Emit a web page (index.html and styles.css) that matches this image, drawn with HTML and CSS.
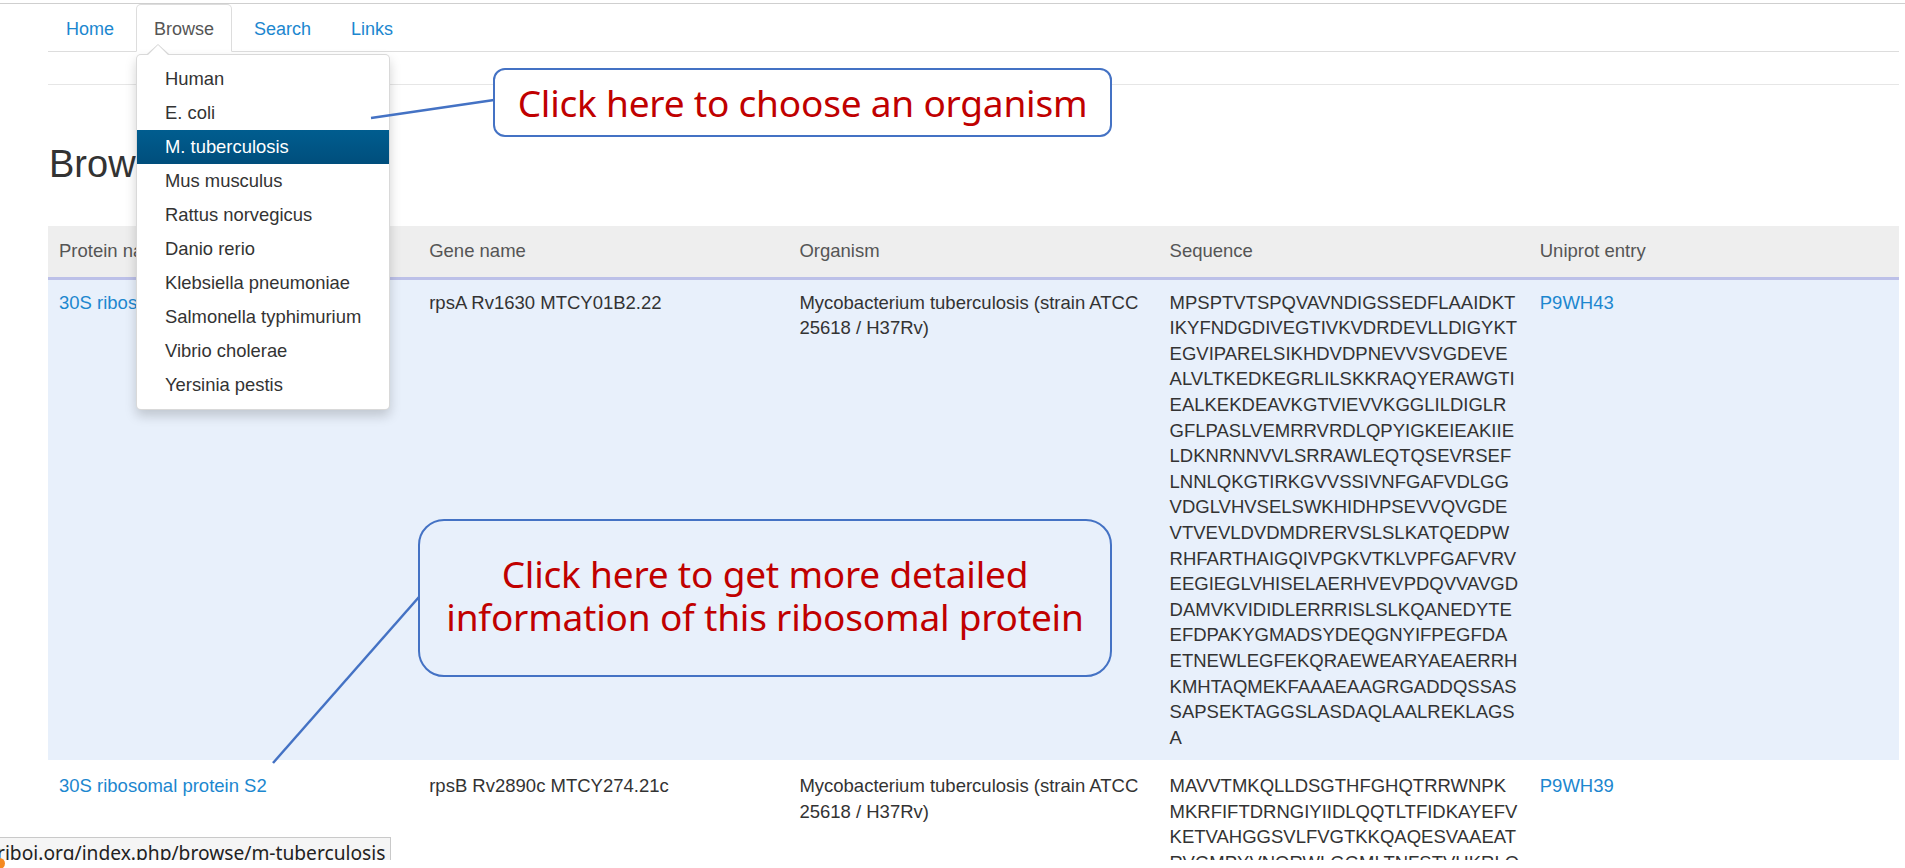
FILE: index.html
```html
<!DOCTYPE html>
<html>
<head>
<meta charset="utf-8">
<title>Browse</title>
<link rel="stylesheet" href="styles.css">
</head>
<body>
<div class="topline"></div>
<div class="container">
  <ul class="nav-tabs">
    <li class="tab"><a href="#">Home</a></li>
    <li class="tab active"><a href="#">Browse</a></li>
    <li class="tab"><a href="#">Search</a></li>
    <li class="tab"><a href="#">Links</a></li>
  </ul>
  <div class="subnav"></div>
  <h2 class="page-title">Browse</h2>
  <table class="proteins">
    <thead>
      <tr>
        <th>Protein name</th>
        <th>Gene name</th>
        <th>Organism</th>
        <th>Sequence</th>
        <th>Uniprot entry</th>
      </tr>
    </thead>
    <tbody>
      <tr class="hover">
        <td><a href="#">30S ribosomal protein S1</a></td>
        <td>rpsA Rv1630 MTCY01B2.22</td>
        <td>Mycobacterium tuberculosis (strain ATCC 25618 / H37Rv)</td>
        <td class="seq">MPSPTVTSPQVAVNDIGSSEDFLAAIDKT<br>IKYFNDGDIVEGTIVKVDRDEVLLDIGYKT<br>EGVIPARELSIKHDVDPNEVVSVGDEVE<br>ALVLTKEDKEGRLILSKKRAQYERAWGTI<br>EALKEKDEAVKGTVIEVVKGGLILDIGLR<br>GFLPASLVEMRRVRDLQPYIGKEIEAKIIE<br>LDKNRNNVVLSRRAWLEQTQSEVRSEF<br>LNNLQKGTIRKGVVSSIVNFGAFVDLGG<br>VDGLVHVSELSWKHIDHPSEVVQVGDE<br>VTVEVLDVDMDRERVSLSLKATQEDPW<br>RHFARTHAIGQIVPGKVTKLVPFGAFVRV<br>EEGIEGLVHISELAERHVEVPDQVVAVGD<br>DAMVKVIDIDLERRRISLSLKQANEDYTE<br>EFDPAKYGMADSYDEQGNYIFPEGFDA<br>ETNEWLEGFEKQRAEWEARYAEAERRH<br>KMHTAQMEKFAAAEAAGRGADDQSSAS<br>SAPSEKTAGGSLASDAQLAALREKLAGS<br>A</td>
        <td><a href="#">P9WH43</a></td>
      </tr>
      <tr>
        <td><a href="#">30S ribosomal protein S2</a></td>
        <td>rpsB Rv2890c MTCY274.21c</td>
        <td>Mycobacterium tuberculosis (strain ATCC 25618 / H37Rv)</td>
        <td class="seq">MAVVTMKQLLDSGTHFGHQTRRWNPK<br>MKRFIFTDRNGIYIIDLQQTLTFIDKAYEFV<br>KETVAHGGSVLFVGTKKQAQESVAAEAT<br>RVGMPYVNQRWLGGMLTNFSTVHKRLQ<br>RLKELEAMEQTGGFEGRTKKEILMLTRE<br>MNKLERTLGGIRDMAKVPSAIWVVDTNK</td>
        <td><a href="#">P9WH39</a></td>
      </tr>
    </tbody>
  </table>
</div>

<ul class="dropdown">
  <li><a href="#">Human</a></li>
  <li><a href="#">E. coli</a></li>
  <li class="selected"><a href="#">M. tuberculosis</a></li>
  <li><a href="#">Mus musculus</a></li>
  <li><a href="#">Rattus norvegicus</a></li>
  <li><a href="#">Danio rerio</a></li>
  <li><a href="#">Klebsiella pneumoniae</a></li>
  <li><a href="#">Salmonella typhimurium</a></li>
  <li><a href="#">Vibrio cholerae</a></li>
  <li><a href="#">Yersinia pestis</a></li>
</ul>
<div class="caret"></div>

<svg class="connectors" width="1905" height="868" viewBox="0 0 1905 868">
  <line x1="371" y1="118" x2="494" y2="100" />
  <line x1="273" y1="763" x2="419" y2="597" />
</svg>

<div class="callout callout-organism">Click here to choose an organism</div>
<div class="callout callout-detail">Click here to get more detailed<br>information of this ribosomal protein</div>

<div class="statusbar">riboi.org/index.php/browse/m-tuberculosis</div>
<div class="bottom-strip"></div>
<div class="orange-dot"></div>
</body>
</html>
```

FILE: styles.css
```css
html, body {
  margin: 0;
  padding: 0;
  background: #ffffff;
}
body {
  font-family: "Liberation Sans", Arial, sans-serif;
  font-size: 18px;
  line-height: 25.6px;
  color: #333333;
  position: relative;
  overflow: hidden;
  height: 868px;
}
a {
  color: #1c87cf;
  text-decoration: none;
}
.topline {
  height: 3px;
  border-bottom: 1px solid #cfcfcf;
}
.container {
  margin-left: 48px;
  width: 1851px;
}
.nav-tabs {
  list-style: none;
  margin: 0;
  padding: 0;
  display: flex;
  border-bottom: 1px solid #dddddd;
}
.tab {
  margin-right: 4px;
  margin-bottom: -1px;
}
.tab a {
  display: block;
  padding: 11px 17px 9px 17px;
  line-height: 26px;
  border: 1px solid transparent;
  border-radius: 5px 5px 0 0;
}
.tab.active a {
  color: #555555;
  background: #ffffff;
  border-color: #dddddd;
  border-bottom-color: transparent;
}
.subnav {
  height: 32px;
  border-bottom: 1px solid #e6e6e6;
}
.page-title {
  font-size: 38px;
  font-weight: 500;
  line-height: 42px;
  margin: 58px 0 41px 1px;
  color: #333333;
}
.proteins {
  width: 1851px;
  border-collapse: collapse;
  table-layout: fixed;
  font-size: 18.5px;
}
.proteins th {
  background: #eeeeee;
  color: #555555;
  font-weight: normal;
  text-align: left;
  padding: 12px 6px 13px 11px;
  border-bottom: 3px solid #bcc0e8;
  vertical-align: top;
}
.proteins td {
  padding: 10px 6px 10px 11px;
  vertical-align: top;
}
.proteins tr.hover td {
  background: #e8f0fb;
}
.proteins tbody tr + tr td {
  padding-top: 13px;
}
.seq {
  word-break: break-all;
}
.dropdown {
  position: absolute;
  left: 136px;
  top: 54px;
  width: 252px;
  margin: 0;
  padding: 7px 0;
  list-style: none;
  background: #ffffff;
  border: 1px solid rgba(0, 0, 0, 0.15);
  border-radius: 5px;
  box-shadow: 0 6px 12px rgba(0, 0, 0, 0.175);
  font-size: 18.4px;
}
.dropdown li a {
  display: block;
  padding: 4px 20px 4px 28px;
  line-height: 26px;
  color: #333333;
  white-space: nowrap;
}
.dropdown li.selected a {
  color: #ffffff;
  background: linear-gradient(#005d8f, #004e7c);
}
.caret {
  position: absolute;
  left: 147px;
  top: 44px;
  width: 0;
  height: 0;
  border-left: 11px solid transparent;
  border-right: 11px solid transparent;
  border-bottom: 10px solid #d6d6d6;
}
.caret::after {
  content: "";
  position: absolute;
  left: -10px;
  top: 1px;
  border-left: 10px solid transparent;
  border-right: 10px solid transparent;
  border-bottom: 10px solid #ffffff;
}
.connectors {
  position: absolute;
  left: 0;
  top: 0;
  pointer-events: none;
}
.connectors line {
  stroke: #4472c4;
  stroke-width: 2.5;
}
.callout {
  position: absolute;
  box-sizing: border-box;
  border: 2.5px solid #4472c4;
  color: #c00000;
  font-family: "Noto Sans", "Open Sans", sans-serif;
  font-size: 37px;
  letter-spacing: -0.2px;
  line-height: 43px;
  text-align: center;
  display: flex;
  align-items: center;
  justify-content: center;
}
.callout-organism {
  left: 493px;
  top: 68px;
  width: 619px;
  height: 69px;
  border-radius: 12px;
  background: #ffffff;
}
.callout-detail {
  left: 418px;
  top: 519px;
  width: 694px;
  height: 158px;
  border-radius: 26px;
  padding-bottom: 6px;
}
.statusbar {
  position: absolute;
  left: -1px;
  top: 837px;
  width: 392px;
  height: 30px;
  box-sizing: border-box;
  background: #f5f5f5;
  border: 1px solid #c9c9c9;
  font-family: "Noto Sans", sans-serif;
  font-size: 19.2px;
  line-height: 30px;
  color: #222222;
  white-space: nowrap;
  overflow: hidden;
  text-indent: -3px;
}
.bottom-strip {
  position: absolute;
  left: 0;
  top: 860px;
  width: 1905px;
  height: 8px;
  background: #ffffff;
}
.orange-dot {
  position: absolute;
  left: -6px;
  top: 858px;
  width: 11px;
  height: 11px;
  border-radius: 50%;
  background: #f5891f;
}
```
